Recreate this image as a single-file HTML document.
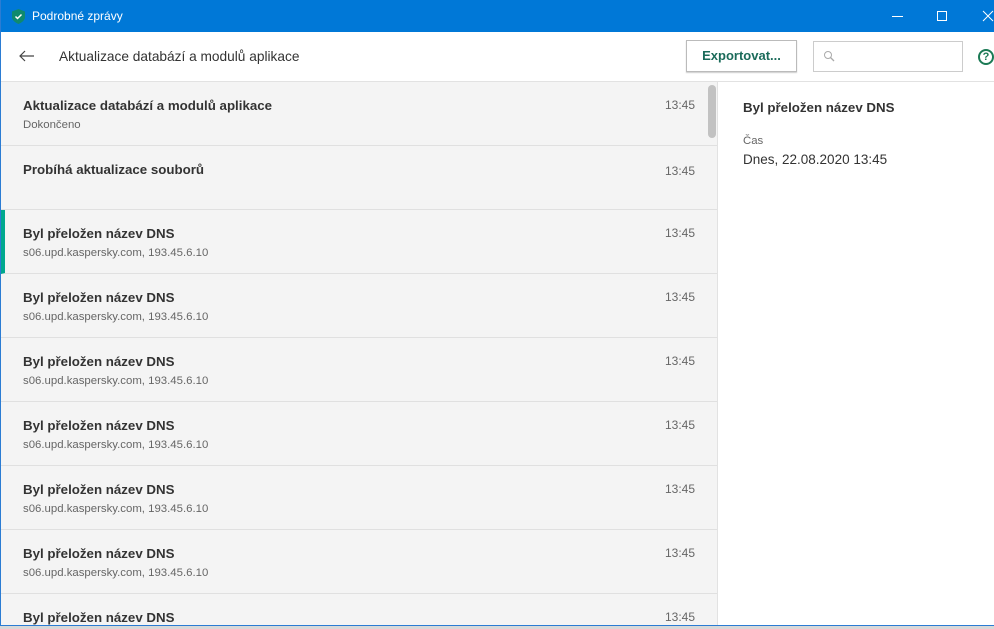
<!DOCTYPE html><html><head><style>
*{margin:0;padding:0;box-sizing:border-box}
body{width:994px;height:629px;overflow:hidden;background:#d8d8d8;font-family:"Liberation Sans",sans-serif;position:relative}
#win{position:absolute;left:0;top:0;width:994px;height:626px;background:#fff;border-left:1px solid #2b7cd3;border-bottom:1px solid #2b7cd3;overflow:hidden}
#tb{position:absolute;left:0;top:0;right:0;height:32px;background:#0078d7;color:#fff;font-size:12px}
#hdr{position:absolute;top:32px;left:0;right:0;height:50px;background:#fff;border-bottom:1px solid #e2e2e2}
#list{position:absolute;top:82px;left:0;width:717px;bottom:0;background:#f4f4f4;border-right:1px solid #e2e2e2;overflow:hidden}
.row{height:64px;border-bottom:1px solid #e0e0e0;position:relative}
.t{position:absolute;left:22px;top:16px;font-size:13.3px;font-weight:bold;color:#333}
.s{position:absolute;left:22px;top:37px;font-size:11.4px;color:#666}
.tm{position:absolute;left:664px;top:16px;font-size:12px;color:#666}
</style></head><body><div id="win">
<div id="tb">
<svg style="position:absolute;left:11px;top:9px" width="13" height="15" viewBox="0 0 13 15"><path d="M6.5 0L13 2.5V8c0 3-3 5.5-6.5 7C3 13.5 0 11 0 8V2.5z" fill="#0f8a6e"/><path d="M3.5 7.5l2 2 4-4" stroke="#fff" stroke-width="1.5" fill="none"/></svg>
<span style="position:absolute;left:31px;top:9px">Podrobné zprávy</span>
<div style="position:absolute;left:891px;top:16px;width:11px;height:1px;background:#fff"></div>
<div style="position:absolute;left:936px;top:11px;width:10px;height:10px;border:1px solid #fff"></div>
<svg style="position:absolute;left:981px;top:10px" width="12" height="12"><path d="M1 1L11 11M11 1L1 11" stroke="#fff" stroke-width="1"/></svg>
</div>
<div id="hdr">
<svg style="position:absolute;left:18px;top:18px" width="16" height="12"><path d="M15 6H1M6 1L1 6l5 5" stroke="#444" stroke-width="1.2" fill="none"/></svg>
<span style="position:absolute;left:58px;top:17px;font-size:13.7px;color:#333">Aktualizace databází a modulů aplikace</span>
<div style="position:absolute;left:685px;top:8px;width:111px;height:32px;border:1px solid #bbb;box-shadow:0 1px 1px #ccc;color:#1b6b5a;font-weight:bold;font-size:13px;text-align:center;line-height:30px">Exportovat...</div>
<div style="position:absolute;left:812px;top:9px;width:150px;height:31px;border:1px solid #ccc"><svg style="position:absolute;left:9px;top:8px" width="12" height="12"><circle cx="5" cy="5" r="3.5" stroke="#aaa" fill="none"/><path d="M7.5 7.5l3.5 3.5" stroke="#aaa" stroke-width="1.3"/></svg></div>
<div style="position:absolute;left:977px;top:17px;width:16px;height:16px;border:2px solid #1b7a55;border-radius:50%;color:#1b7a55;font-size:11px;font-weight:bold;text-align:center;line-height:12px">?</div>
</div>
<div id="list">
<div class="row"><div class="t">Aktualizace databází a modulů aplikace</div><div class="s">Dokončeno</div><div class="tm">13:45</div></div>
<div class="row"><div class="t">Probíhá aktualizace souborů</div><div class="tm" style="top:18px">13:45</div></div>
<div class="row" style="border-left:4px solid #00a88e"><div class="t" style="left:18px">Byl přeložen název DNS</div><div class="s" style="left:18px">s06.upd.kaspersky.com, 193.45.6.10</div><div class="tm" style="left:660px">13:45</div></div>
<div class="row"><div class="t">Byl přeložen název DNS</div><div class="s">s06.upd.kaspersky.com, 193.45.6.10</div><div class="tm">13:45</div></div>
<div class="row"><div class="t">Byl přeložen název DNS</div><div class="s">s06.upd.kaspersky.com, 193.45.6.10</div><div class="tm">13:45</div></div>
<div class="row"><div class="t">Byl přeložen název DNS</div><div class="s">s06.upd.kaspersky.com, 193.45.6.10</div><div class="tm">13:45</div></div>
<div class="row"><div class="t">Byl přeložen název DNS</div><div class="s">s06.upd.kaspersky.com, 193.45.6.10</div><div class="tm">13:45</div></div>
<div class="row"><div class="t">Byl přeložen název DNS</div><div class="s">s06.upd.kaspersky.com, 193.45.6.10</div><div class="tm">13:45</div></div>
<div class="row"><div class="t">Byl přeložen název DNS</div><div class="s">s06.upd.kaspersky.com, 193.45.6.10</div><div class="tm">13:45</div></div>
<div style="position:absolute;left:707px;top:3px;width:8px;height:53px;background:#c2c2c2;border-radius:4px"></div>
</div>
<div style="position:absolute;left:742px;top:100px;font-size:13.3px;font-weight:bold;color:#333">Byl přeložen název DNS</div>
<div style="position:absolute;left:742px;top:135px;font-size:11.4px;color:#666">Čas</div>
<div style="position:absolute;left:742px;top:152px;font-size:13.5px;color:#333">Dnes, 22.08.2020 13:45</div>
</div></body></html>
